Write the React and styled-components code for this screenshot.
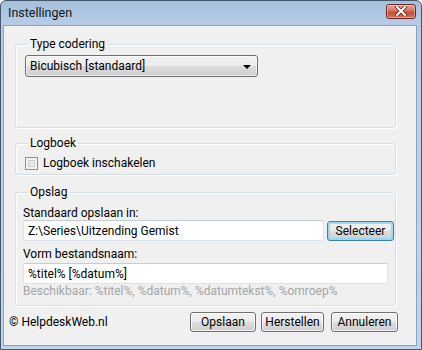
import React, { useState } from "react";
import styled, { createGlobalStyle } from "styled-components";

const GlobalStyle = createGlobalStyle`
  html, body {
    margin: 0;
    padding: 0;
    background: #ffffff;
  }
  body {
    font-family: Roboto, "Liberation Sans", sans-serif;
    font-size: 12px;
    color: #000;
  }
`;

const Window = styled.div`
  box-sizing: border-box;
  width: 422px;
  height: 350px;
  display: flex;
  flex-direction: column;
  border: 1px solid #46586d;
  border-radius: 6px 6px 0 0;
  background: linear-gradient(#a6bfdc 0, #b7cde7 24px, #bfd4ec 100%);
  padding: 0 4px 3px 2px;
  overflow: hidden;
`;

const TitleBar = styled.div`
  height: 24px;
  display: flex;
  align-items: center;
  justify-content: space-between;
  padding-left: 5px;
  padding-right: 1px;
`;

const Title = styled.span`
  font-size: 12.5px;
  color: #0c1620;
  margin-top: -1px;
`;

const CloseButton = styled.button`
  box-sizing: border-box;
  width: 30px;
  height: 15px;
  margin-top: -4px;
  padding: 0;
  display: flex;
  align-items: center;
  justify-content: center;
  border: 1px solid #6b2a22;
  border-radius: 3px;
  background: linear-gradient(#e7a495 0, #d8735f 45%, #c44b34 55%, #d0765e 100%);
  box-shadow: inset 0 0 0 1px rgba(255, 255, 255, 0.35);
`;

const Client = styled.div`
  flex: 1;
  display: flex;
  flex-direction: column;
  background: #f0f0f0;
  border: 1px solid #8ca3bd;
  padding: 11px 20px 0 11px;
`;

const Group = styled.fieldset`
  margin: 0 0 ${(p) => p.$gap || 0}px;
  padding: 4px 1px 0 7px;
  height: ${(p) => p.$height}px;
  box-sizing: border-box;
  border: 1px solid #d5dfe5;
  border-radius: 3px;
  box-shadow: inset 1px 1px 0 #ffffff, 1px 1px 0 #ffffff;
  min-width: 0;
`;

const Legend = styled.legend`
  padding: 0 2px;
  margin-left: 5px;
  line-height: 14px;
`;

const Combo = styled.div`
  box-sizing: border-box;
  width: 233px;
  height: 22px;
  margin-left: 2px;
  display: flex;
  align-items: center;
  justify-content: space-between;
  padding: 0 6px 0 4px;
  border: 1px solid #707070;
  border-radius: 3px;
  background: linear-gradient(#f2f2f2 0, #ebebeb 50%, #dddddd 50%, #cfcfcf 100%);
  box-shadow: inset 0 0 0 1px rgba(255, 255, 255, 0.6);
`;

const Arrow = styled.span`
  width: 0;
  height: 0;
  border-left: 4px solid transparent;
  border-right: 4px solid transparent;
  border-top: 4px solid #000;
  margin-top: 2px;
`;

const CheckRow = styled.label`
  display: flex;
  align-items: center;
  gap: 5px;
  margin: 2px 0 0 2px;
`;

const CheckBox = styled.span`
  box-sizing: border-box;
  width: 13px;
  height: 13px;
  border: 1px solid #8e8f8f;
  background: linear-gradient(135deg, #dcdcdc 0, #f4f4f4 100%);
  box-shadow: inset 0 0 0 2px #f4f4f4, inset 0 0 0 3px #cfcfcf;
`;

const FieldLabel = styled.div`
  line-height: 14px;
  margin: ${(p) => p.$top || 0}px 0 ${(p) => p.$bottom || 0}px;
`;

const Row = styled.div`
  display: flex;
  align-items: center;
  gap: 3px;
`;

const TextInput = styled.input`
  box-sizing: border-box;
  width: ${(p) => p.$width}px;
  height: 21px;
  margin: 0;
  padding: 0 4px;
  font: inherit;
  color: #000;
  background: #fff;
  border: 1px solid #dbe3ec;
  border-top-color: #c3ced9;
  border-radius: 2px;
  outline: none;
`;

const Hint = styled.div`
  color: #a5a5a5;
  line-height: 15px;
`;

const Button = styled.button`
  box-sizing: border-box;
  width: ${(p) => p.$width}px;
  height: 20px;
  padding: 0;
  margin-left: ${(p) => p.$shift || 0}px;
  font: inherit;
  color: #000;
  border: 1px solid ${(p) => (p.$focus ? "#3c7fb1" : "#707070")};
  border-radius: 3px;
  background: linear-gradient(#f2f2f2 0, #ebebeb 50%, #dddddd 50%, #cfcfcf 100%);
  box-shadow: inset 0 0 0 ${(p) => (p.$focus ? "2px rgba(150, 215, 245, 0.9)" : "1px rgba(255, 255, 255, 0.7)")};
`;

const Footer = styled.div`
  display: flex;
  align-items: center;
  justify-content: space-between;
  margin: 0 -2px 0 -6px;
  padding-top: 6px;
`;

const Buttons = styled.div`
  display: flex;
  gap: 5px;
`;

export default function App() {
  const [path, setPath] = useState("Z:\\Series\\Uitzending Gemist");
  const [pattern, setPattern] = useState("%titel% [%datum%]");

  return (
    <>
      <GlobalStyle />
      <Window>
        <TitleBar>
          <Title>Instellingen</Title>
          <CloseButton aria-label="Sluiten">
            <svg width="12" height="10" viewBox="0 0 12 10">
              <path
                d="M2 1 L10 9 M10 1 L2 9"
                stroke="#4a2420"
                strokeWidth="3.4"
                strokeLinecap="square"
              />
              <path
                d="M2 1 L10 9 M10 1 L2 9"
                stroke="#ffffff"
                strokeWidth="2"
                strokeLinecap="square"
              />
            </svg>
          </CloseButton>
        </TitleBar>
        <Client>
          <Group $height={91} $gap={8}>
            <Legend>Type codering</Legend>
            <Combo>
              <span>Bicubisch [standaard]</span>
              <Arrow />
            </Combo>
          </Group>
          <Group $height={39} $gap={10}>
            <Legend>Logboek</Legend>
            <CheckRow>
              <CheckBox />
              <span>Logboek inschakelen</span>
            </CheckRow>
          </Group>
          <Group $height={121}>
            <Legend>Opslag</Legend>
            <FieldLabel $top={3}>Standaard opslaan in:</FieldLabel>
            <Row>
              <TextInput
                $width={301}
                value={path}
                onChange={(e) => setPath(e.target.value)}
              />
              <Button $width={67} $focus>
                Selecteer
              </Button>
            </Row>
            <FieldLabel $top={6} $bottom={2}>
              Vorm bestandsnaam:
            </FieldLabel>
            <TextInput
              $width={365}
              value={pattern}
              onChange={(e) => setPattern(e.target.value)}
            />
            <Hint>Beschikbaar: %titel%, %datum%, %datumtekst%, %omroep%</Hint>
          </Group>
          <Footer>
            <span>© HelpdeskWeb.nl</span>
            <Buttons>
              <Button $width={66}>Opslaan</Button>
              <Button $width={63}>Herstellen</Button>
              <Button $width={67} $shift={2}>
                Annuleren
              </Button>
            </Buttons>
          </Footer>
        </Client>
      </Window>
    </>
  );
}
